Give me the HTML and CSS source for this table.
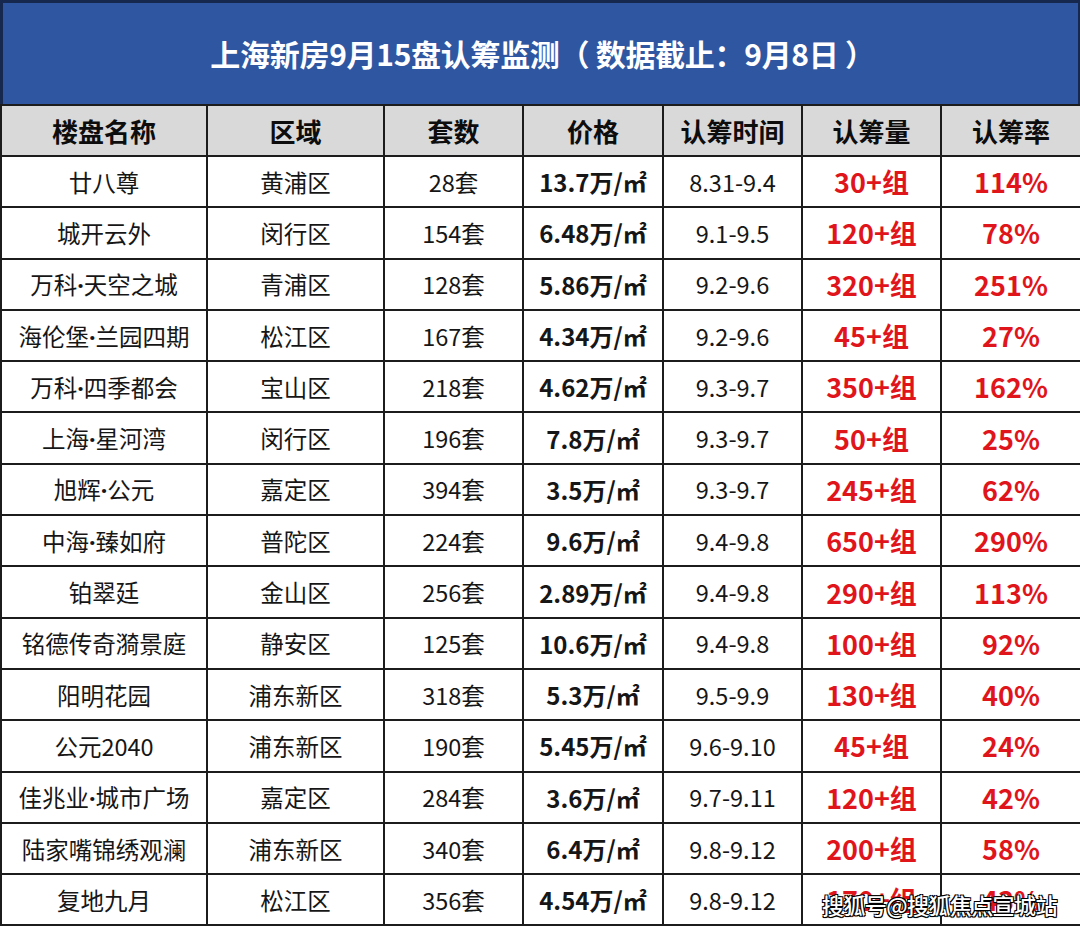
FILE: index.html
```html
<!DOCTYPE html>
<html lang="zh">
<head>
<meta charset="utf-8">
<link rel="stylesheet" href="styles.css">
</head>
<body>
<div class="page">
  <div class="title">上海新房9月15盘认筹监测（ 数据截止：9月8日 ）</div>
  <table class="grid">
    <colgroup>
      <col class="c1"><col class="c2"><col class="c3"><col class="c4"><col class="c5"><col class="c6"><col class="c7">
    </colgroup>
    <thead>
      <tr><th>楼盘名称</th><th>区域</th><th>套数</th><th>价格</th><th>认筹时间</th><th>认筹量</th><th>认筹率</th></tr>
    </thead>
    <tbody>
      <tr><td>廿八尊</td><td>黄浦区</td><td>28套</td><td class="price">13.7万/㎡</td><td>8.31-9.4</td><td class="red">30+组</td><td class="red">114%</td></tr>
      <tr><td>城开云外</td><td>闵行区</td><td>154套</td><td class="price">6.48万/㎡</td><td>9.1-9.5</td><td class="red">120+组</td><td class="red">78%</td></tr>
      <tr><td>万科<span class="dot">·</span>天空之城</td><td>青浦区</td><td>128套</td><td class="price">5.86万/㎡</td><td>9.2-9.6</td><td class="red">320+组</td><td class="red">251%</td></tr>
      <tr><td>海伦堡<span class="dot">·</span>兰园四期</td><td>松江区</td><td>167套</td><td class="price">4.34万/㎡</td><td>9.2-9.6</td><td class="red">45+组</td><td class="red">27%</td></tr>
      <tr><td>万科<span class="dot">·</span>四季都会</td><td>宝山区</td><td>218套</td><td class="price">4.62万/㎡</td><td>9.3-9.7</td><td class="red">350+组</td><td class="red">162%</td></tr>
      <tr><td>上海<span class="dot">·</span>星河湾</td><td>闵行区</td><td>196套</td><td class="price">7.8万/㎡</td><td>9.3-9.7</td><td class="red">50+组</td><td class="red">25%</td></tr>
      <tr><td>旭辉<span class="dot">·</span>公元</td><td>嘉定区</td><td>394套</td><td class="price">3.5万/㎡</td><td>9.3-9.7</td><td class="red">245+组</td><td class="red">62%</td></tr>
      <tr><td>中海<span class="dot">·</span>臻如府</td><td>普陀区</td><td>224套</td><td class="price">9.6万/㎡</td><td>9.4-9.8</td><td class="red">650+组</td><td class="red">290%</td></tr>
      <tr><td>铂翠廷</td><td>金山区</td><td>256套</td><td class="price">2.89万/㎡</td><td>9.4-9.8</td><td class="red">290+组</td><td class="red">113%</td></tr>
      <tr><td>铭德传奇漪景庭</td><td>静安区</td><td>125套</td><td class="price">10.6万/㎡</td><td>9.4-9.8</td><td class="red">100+组</td><td class="red">92%</td></tr>
      <tr><td>阳明花园</td><td>浦东新区</td><td>318套</td><td class="price">5.3万/㎡</td><td>9.5-9.9</td><td class="red">130+组</td><td class="red">40%</td></tr>
      <tr><td>公元2040</td><td>浦东新区</td><td>190套</td><td class="price">5.45万/㎡</td><td>9.6-9.10</td><td class="red">45+组</td><td class="red">24%</td></tr>
      <tr><td>佳兆业<span class="dot">·</span>城市广场</td><td>嘉定区</td><td>284套</td><td class="price">3.6万/㎡</td><td>9.7-9.11</td><td class="red">120+组</td><td class="red">42%</td></tr>
      <tr><td>陆家嘴锦绣观澜</td><td>浦东新区</td><td>340套</td><td class="price">6.4万/㎡</td><td>9.8-9.12</td><td class="red">200+组</td><td class="red">58%</td></tr>
      <tr><td>复地九月</td><td>松江区</td><td>356套</td><td class="price">4.54万/㎡</td><td>9.8-9.12</td><td class="red">170+组</td><td class="red">43%</td></tr>
    </tbody>
  </table>
  <div class="watermark">搜狐号@搜狐焦点宣城站</div>
</div>
</body>
</html>
```

FILE: styles.css
```css
html, body {
  margin: 0;
  padding: 0;
  background: #ffffff;
}
.page {
  position: relative;
  width: 1080px;
  height: 926px;
  overflow: hidden;
  font-family: "Noto Sans CJK SC", "Noto Sans", sans-serif;
  color: #111;
}
.title {
  box-sizing: border-box;
  height: 104px;
  background: #2f56a1;
  border-top: 3px solid #17284f;
  border-left: 3px solid #17284f;
  border-right: 2px solid #17284f;
  color: #ffffff;
  font-weight: 700;
  font-size: 30px;
  display: flex;
  align-items: center;
  justify-content: center;
  padding-bottom: 2px;
  padding-left: 4px;
  letter-spacing: -0.3px;
  white-space: pre;
}
.grid {
  width: 1080px;
  border-collapse: collapse;
  table-layout: fixed;
}
.c1 { width: 206px; }
.c2 { width: 177px; }
.c3 { width: 139px; }
.c4 { width: 140px; }
.c5 { width: 139px; }
.c6 { width: 139px; }
.c7 { width: 140px; }
.grid th, .grid td {
  border: 2px solid #1c1c1c;
  text-align: center;
  vertical-align: middle;
  padding: 0;
  white-space: nowrap;
}
.grid th {
  height: 49px;
  background: #d9d9d9;
  font-size: 26px;
  font-weight: 700;
  color: #0d0d0d;
}
.grid td {
  height: 49.3px;
  font-size: 23.5px;
  font-weight: 400;
  color: #161616;
}
.dot {
  font-family: "Noto Sans", "Liberation Sans", sans-serif;
  font-weight: 700;
}
.grid td.price {
  font-weight: 700;
  font-size: 24px;
}
.grid td.red {
  color: #e0151c;
  font-weight: 700;
  font-size: 27px;
}
.watermark {
  position: absolute;
  left: 822px;
  top: 888px;
  font-size: 22px;
  font-weight: 500;
  color: #ffffff;
  letter-spacing: -0.6px;
  text-shadow: 1px 1px 0 #000, -1px -1px 0 #000, 1px -1px 0 #000, -1px 1px 0 #000, 0 1px 1px #000;
}
```
